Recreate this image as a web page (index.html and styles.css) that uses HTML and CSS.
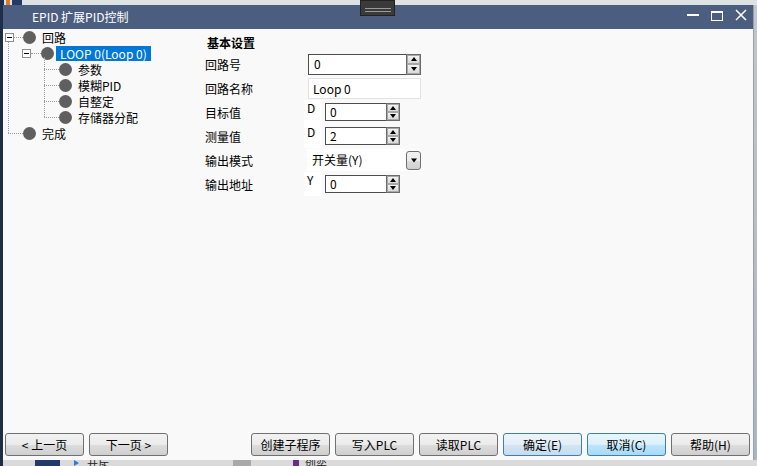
FILE: index.html
```html
<!DOCTYPE html>
<html lang="zh-CN">
<head>
<meta charset="utf-8">
<title>EPID 扩展PID控制</title>
<link rel="stylesheet" href="styles.css">
</head>
<body>
<div class="screen">
  <div class="top-strip">
    <span class="ts-a"></span><span class="ts-b"></span><span class="ts-c"></span>
    <div class="handle"><span></span><span></span></div>
  </div>
  <div class="mid">
    <div class="left-edge"></div>
    <div class="dialog">
      <div class="titlebar">
        <span class="title">EPID 扩展PID控制</span>
        <svg class="wctrls" width="70" height="24" viewBox="0 0 70 24">
          <rect x="4" y="9" width="12" height="2" fill="#fff"/>
          <rect x="28.5" y="6.5" width="11" height="9" fill="none" stroke="#fff" stroke-width="1"/>
          <rect x="28" y="6" width="12" height="2" fill="#fff"/>
          <path d="M53 5 L63 15 M63 5 L53 15" stroke="#fff" stroke-width="1.5"/>
        </svg>
      </div>
      <div class="client">
        <div class="main">
          <div class="tree">
            <div class="vline v1"></div>
            <div class="vline v2"></div>
            <div class="trow lvl0">
              <span class="exp"></span><span class="hl w9"></span><span class="dot"></span><span class="tl">回路</span>
            </div>
            <div class="trow lvl1">
              <span class="exp"></span><span class="hl w10"></span><span class="dot"></span><span class="tl sel">LOOP 0(Loop 0)</span>
            </div>
            <div class="trow lvl2"><span class="hl w15"></span><span class="dot"></span><span class="tl">参数</span></div>
            <div class="trow lvl2"><span class="hl w15"></span><span class="dot"></span><span class="tl">模糊PID</span></div>
            <div class="trow lvl2"><span class="hl w15"></span><span class="dot"></span><span class="tl">自整定</span></div>
            <div class="trow lvl2"><span class="hl w15"></span><span class="dot"></span><span class="tl">存储器分配</span></div>
            <div class="trow lvl0b"><span class="hl w15"></span><span class="dot"></span><span class="tl">完成</span></div>
          </div>
          <div class="panel">
            <div class="heading">基本设置</div>
            <div class="frow">
              <span class="flabel">回路号</span>
              <div class="spin big">
                <span class="sfield">0</span>
                <span class="sbtns"><span class="up"></span><span class="dn"></span></span>
              </div>
            </div>
            <div class="frow">
              <span class="flabel">回路名称</span>
              <span class="tinput">Loop 0</span>
            </div>
            <div class="frow">
              <span class="flabel">目标值</span>
              <span class="area">D</span>
              <div class="spin small">
                <span class="sfield">0</span>
                <span class="sbtns"><span class="up"></span><span class="dn"></span></span>
              </div>
            </div>
            <div class="frow">
              <span class="flabel">测量值</span>
              <span class="area">D</span>
              <div class="spin small">
                <span class="sfield">2</span>
                <span class="sbtns"><span class="up"></span><span class="dn"></span></span>
              </div>
            </div>
            <div class="frow">
              <span class="flabel">输出模式</span>
              <div class="combo">
                <span class="cfield">开关量(Y)</span>
                <span class="cbtn"></span>
              </div>
            </div>
            <div class="frow">
              <span class="flabel">输出地址</span>
              <span class="area">Y</span>
              <div class="spin small">
                <span class="sfield">0</span>
                <span class="sbtns"><span class="up"></span><span class="dn"></span></span>
              </div>
            </div>
          </div>
        </div>
        <div class="footer">
          <div class="bgroup">
            <button class="btn">&lt; 上一页</button>
            <button class="btn">下一页 &gt;</button>
          </div>
          <div class="bgroup">
            <button class="btn">创建子程序</button>
            <button class="btn">写入PLC</button>
            <button class="btn">读取PLC</button>
            <button class="btn def">确定(E)</button>
            <button class="btn hot">取消(C)</button>
            <button class="btn">帮助(H)</button>
          </div>
        </div>
      </div>
    </div>
    <div class="right-edge"></div>
  </div>
  <div class="bottom-strip">
    <span class="bs-a"></span><span class="bs-b"></span><span class="bs-tri"></span><span class="bs-t">开斥</span><span class="bs-c"></span><span class="bs-d"></span><span class="bs-e">创奕</span>
  </div>
</div>
</body>
</html>
```

FILE: styles.css
```css
* { box-sizing: border-box; }
html, body { margin: 0; padding: 0; }
body {
  width: 757px;
  height: 466px;
  overflow: hidden;
  background: #c9ced3;
  font-family: "Noto Sans CJK SC", "Noto Sans", sans-serif;
  font-size: 12px;
  color: #000;
}
.screen { width: 757px; height: 466px; display: flex; flex-direction: column; }

/* background desktop bits */
.top-strip {
  height: 5px;
  position: relative;
  background: #dde2e5;
  display: flex;
}
.ts-a { width: 4px; background: #1c2c4a; }
.ts-b { width: 4px; margin-left: 2px; background: #e07a2a; }
.ts-c { width: 10px; margin-left: 2px; background: #253a66; }
.handle {
  position: absolute;
  left: 360px;
  top: 0;
  width: 35px;
  height: 16px;
  background: #3a3a3a;
  border: 1px solid #222;
  z-index: 5;
  display: flex;
  flex-direction: column;
  align-items: center;
  padding-top: 7px;
  gap: 2px;
}
.handle span { width: 26px; height: 1px; background: #9a9a9a; }

.mid { height: 455px; display: flex; }
.left-edge { width: 3px; background: #1e2d48; }
.right-edge { width: 4px; background: linear-gradient(#c2c7cb, #aeb5ba); border-left: 1px solid #9aa1a6; }

.bottom-strip {
  height: 6px;
  background: #dadada;
  display: flex;
  align-items: center;
  overflow: hidden;
  font-size: 11px;
  line-height: 6px;
}
.bs-a { width: 3px; height: 6px; background: #1e2d48; }
.bs-b { width: 25px; height: 6px; margin-left: 32px; background: #213a6a; }
.bs-tri { width: 0; height: 0; margin-left: 14px; border-left: 5px solid #2b7bd3; border-top: 3px solid transparent; border-bottom: 3px solid transparent; }
.bs-t { margin-left: 8px; color: #222; }
.bs-c { width: 18px; height: 6px; margin-left: 124px; background: #a9a9a9; }
.bs-d { width: 6px; height: 6px; margin-left: 42px; background: #6d2c8a; }
.bs-e { margin-left: 6px; color: #222; }

/* dialog */
.dialog {
  width: 750px;
  display: flex;
  flex-direction: column;
  background: #f9f9f9;
}
.titlebar {
  height: 24px;
  background: #4b5e7f;
  display: flex;
  align-items: center;
  justify-content: space-between;
  padding-left: 29px;
  color: #fff;
}
.title { font-size: 12px; line-height: 24px; }
.wctrls { display: block; }

.client { flex: 1; display: flex; flex-direction: column; }
.main { flex: 1; display: flex; }

/* tree */
.tree { width: 199px; position: relative; }
.trow { height: 16px; display: flex; align-items: center; }
.lvl0 { padding-left: 2px; }
.lvl1 { padding-left: 19px; }
.lvl2 { padding-left: 41px; }
.lvl0b { padding-left: 5px; }
.exp {
  width: 9px;
  height: 9px;
  border: 1px solid #8e8f8f;
  background: #fff;
  position: relative;
  flex: none;
}
.exp::after {
  content: "";
  position: absolute;
  left: 1px;
  top: 3px;
  width: 5px;
  height: 1px;
  background: #000;
}
.hl { height: 1px; border-top: 1px dotted #9a9a9a; flex: none; }
.w9 { width: 9px; }
.w10 { width: 10px; }
.w15 { width: 15px; }
.dot {
  width: 13px;
  height: 13px;
  border-radius: 50%;
  background: #5f5f5f;
  flex: none;
}
.tl { margin-left: 2px; padding: 0 4px; line-height: 15px; height: 15px; white-space: nowrap; }
.tl.sel { background: #0078d7; color: #fff; }
.vline { position: absolute; width: 1px; border-left: 1px dotted #9a9a9a; }
.v1 { left: 5px; top: 12px; height: 92px; }
.v2 { left: 41px; top: 28px; height: 60px; }

/* panel */
.panel { flex: 1; padding-left: 3px; padding-top: 4px; }
.heading { height: 19px; line-height: 19px; font-weight: bold; padding-left: 2px; }
.frow { height: 24px; display: flex; align-items: center; }
.flabel { width: 97px; flex: none; }

.spin { display: flex; flex: none; }
.spin.big { width: 113px; height: 21px; margin-left: 6px; }
.spin.small { width: 75px; height: 18px; margin-left: 3px; }
.sfield {
  flex: 1;
  background: #fff;
  border: 1px solid #4d4d4d;
  border-right: none;
  padding-left: 5px;
  display: flex;
  align-items: center;
  line-height: 1;
}
.spin.small .sfield { padding-left: 4px; }
.sbtns {
  width: 15px;
  display: flex;
  flex-direction: column;
  border: 1px solid #6b6b6b;
  background: #fff;
}
.spin.small .sbtns { width: 14px; }
.sbtns span {
  flex: 1;
  position: relative;
  background: linear-gradient(#f4f4f4, #d9d9d9);
  border: 1px solid #a8a8a8;
}
.sbtns .up::after, .sbtns .dn::after {
  content: "";
  position: absolute;
  left: 50%;
  top: 50%;
  width: 0;
  height: 0;
  border-left: 3.5px solid transparent;
  border-right: 3.5px solid transparent;
  transform: translate(-50%, -50%);
}
.sbtns .up::after { border-bottom: 4px solid #000; }
.sbtns .dn::after { border-top: 4px solid #000; }

.tinput {
  width: 113px;
  height: 21px;
  margin-left: 6px;
  background: #fff;
  border: 1px solid #e2e2e2;
  padding-left: 4px;
  display: flex;
  align-items: center;
  flex: none;
}
.area {
  width: 18px;
  height: 24px;
  margin-left: 2px;
  background: #fff;
  padding: 1px 0 0 3px;
  line-height: 14px;
  flex: none;
}

.combo { width: 114px; height: 22px; margin-left: 5px; display: flex; align-items: center; flex: none; background: #fff; }
.cfield { flex: 1; padding-left: 5px; line-height: 22px; }
.cbtn {
  width: 15px;
  height: 19px;
  border: 1px solid #707070;
  border-radius: 3px;
  background: linear-gradient(#f2f2f2 0%, #ebebeb 50%, #dddddd 51%, #cfcfcf 100%);
  position: relative;
}
.cbtn::after {
  content: "";
  position: absolute;
  left: 50%;
  top: 50%;
  border-left: 3.5px solid transparent;
  border-right: 3.5px solid transparent;
  border-top: 4px solid #000;
  transform: translate(-50%, -40%);
}

/* footer */
.footer {
  height: 27px;
  display: flex;
  justify-content: space-between;
  padding: 0 3px 4px 2px;
}
.bgroup { display: flex; gap: 5px; }
.btn {
  width: 79px;
  height: 23px;
  border: 1px solid #707070;
  border-radius: 3px;
  background: linear-gradient(#f2f2f2 0%, #ebebeb 50%, #dddddd 51%, #cfcfcf 100%);
  font-family: "Noto Sans CJK SC", "Noto Sans", sans-serif;
  font-size: 12px;
  color: #000;
  padding: 0;
  line-height: 20px;
}
.btn.def {
  border-color: #3c7fb1;
  background: linear-gradient(#eef5fb 0%, #e3eef8 50%, #d3e5f3 51%, #c6dcee 100%);
}
.btn.hot {
  border-color: #3c7fb1;
  background: linear-gradient(#eaf6fd 0%, #d9f0fc 50%, #bee6fd 51%, #a7d9f5 100%);
}
```
